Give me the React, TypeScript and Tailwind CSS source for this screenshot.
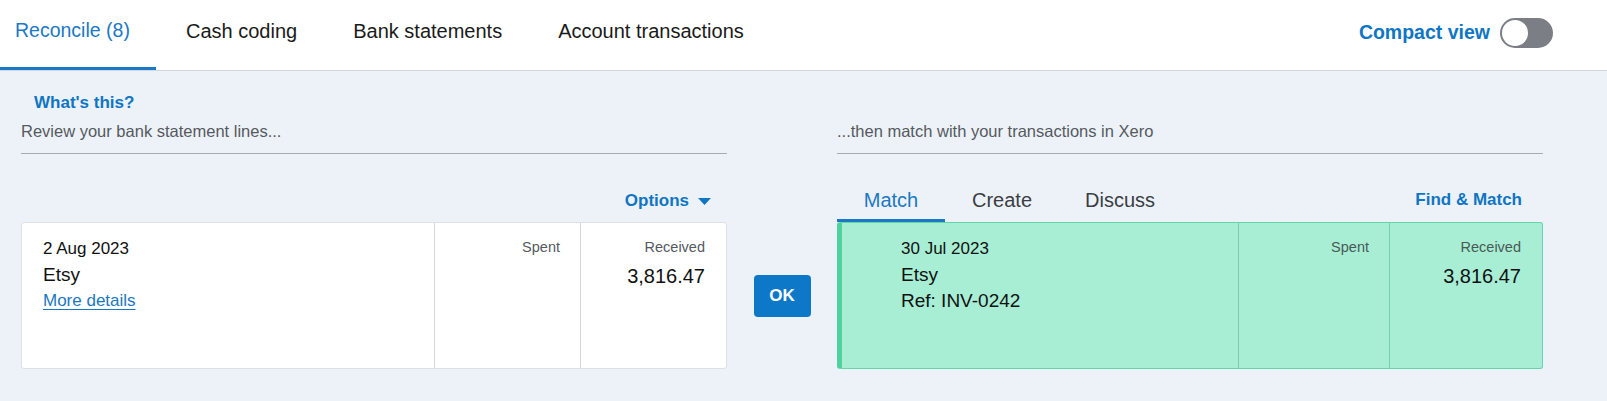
import React from "react";

const font = { fontFamily: '"Liberation Sans", Arial, sans-serif' };

export default function App() {
  return (
    <div className="w-[1607px] h-[401px] bg-[#edf2f8] overflow-hidden" style={font}>
      {/* Header */}
      <div className="h-[71px] bg-white border-b border-[#d3d7dc] flex items-stretch justify-between">
        <div className="flex items-stretch">
          <div className="w-[156px] pl-[15px] flex items-center border-b-[3px] border-[#1b78c4] text-[19.5px] text-[#1b78c4] pb-[5px]">
            Reconcile (8)
          </div>
          <div className="pl-[30px] pr-[26px] flex items-center text-[20px] text-[#1a1a1a] pb-[8px]">Cash coding</div>
          <div className="pl-[30px] pr-[26px] flex items-center text-[20px] text-[#1a1a1a] pb-[8px]">Bank statements</div>
          <div className="pl-[30px] pr-[26px] flex items-center text-[20px] text-[#1a1a1a] pb-[8px]">Account transactions</div>
        </div>
        <div className="flex items-center pr-[54px] gap-[10px] pb-[5px]">
          <span className="text-[19.5px] font-bold text-[#0f76c4]">Compact view</span>
          <div className="w-[53px] h-[30px] rounded-full bg-[#7b7e85] p-[2px] flex items-center">
            <div className="w-[26px] h-[26px] rounded-full bg-white" />
          </div>
        </div>
      </div>

      {/* Body */}
      <div className="flex pl-[21px] pt-[22px]">
        {/* Left column */}
        <div className="w-[706px] flex flex-col">
          <div className="pl-[13px] text-[17px] leading-[20px] font-bold text-[#0f76c4]">What's this?</div>
          <div className="mt-[8px] pb-[12px] border-b border-[#a6abb1] text-[16.5px] leading-[20px] text-[#555a60]">
            Review your bank statement lines...
          </div>
          <div className="h-[68px] flex items-center justify-end pr-[16px] pt-[26px]">
            <span className="text-[17px] font-bold text-[#0f76c4]">Options</span>
            <svg className="ml-[9px]" width="13" height="7" viewBox="0 0 13 7">
              <path d="M0 0 H13 L6.5 7 Z" fill="#0f76c4" />
            </svg>
          </div>
          <div className="h-[147px] bg-white rounded-[3px] border border-[#dde0e4] flex">
            <div className="w-[412px] pl-[21px] pt-[13px]">
              <div className="text-[17px] leading-[26px] text-[#111]">2 Aug 2023</div>
              <div className="text-[19px] leading-[26px] text-[#111]">Etsy</div>
              <div className="text-[17px] leading-[26px] text-[#1a78c2] underline underline-offset-[3px]">More details</div>
            </div>
            <div className="w-[146px] border-l border-[#d4d7db] pr-[20px] pt-[15px] text-right">
              <div className="text-[14.5px] leading-[18px] text-[#555a60]">Spent</div>
            </div>
            <div className="flex-1 border-l border-[#d4d7db] pr-[21px] pt-[15px] text-right">
              <div className="text-[14.5px] leading-[18px] text-[#555a60]">Received</div>
              <div className="mt-[7px] text-[20px] leading-[26px] text-[#111]">3,816.47</div>
            </div>
          </div>
        </div>

        {/* Middle OK */}
        <div className="w-[110px] flex flex-col">
          <div className="h-[129px]" />
          <div className="h-[147px] flex items-center justify-center">
            <div className="w-[57px] h-[42px] rounded-[4px] bg-[#0d78c8] text-white text-[17px] font-bold flex items-center justify-center">
              OK
            </div>
          </div>
        </div>

        {/* Right column */}
        <div className="w-[706px] flex flex-col">
          <div className="h-[20px]" />
          <div className="mt-[8px] pb-[12px] border-b border-[#a6abb1] text-[16.5px] leading-[20px] text-[#555a60]">
            ...then match with your transactions in Xero
          </div>
          <div className="h-[68px] flex items-end justify-between">
            <div className="flex items-stretch h-[46px]">
              <div className="w-[108px] flex items-center justify-center border-b-[3px] border-[#1b78c4] text-[20px] text-[#1b78c4] pt-[4px]">
                Match
              </div>
              <div className="pl-[27px] pr-[27px] flex items-center text-[20px] text-[#3a3e44] pt-[1px]">Create</div>
              <div className="pl-[26px] flex items-center text-[20px] text-[#3a3e44] pt-[1px]">Discuss</div>
            </div>
            <div className="h-[46px] flex items-center pr-[21px] pt-[1px] text-[17px] font-bold text-[#0f76c4]">
              Find &amp; Match
            </div>
          </div>
          <div className="h-[147px] bg-[#a7eed5] rounded-[3px] border border-[#62d5a9] border-l-[5px] border-l-[#50d29f] flex">
            <div className="w-[396px] pl-[59px] pt-[13px]">
              <div className="text-[17px] leading-[26px] text-[#111]">30 Jul 2023</div>
              <div className="text-[19px] leading-[26px] text-[#111]">Etsy</div>
              <div className="text-[19px] leading-[26px] text-[#111]">Ref: INV-0242</div>
            </div>
            <div className="w-[151px] border-l border-[#7ccfae] pr-[20px] pt-[15px] text-right">
              <div className="text-[14.5px] leading-[18px] text-[#4a5a55]">Spent</div>
            </div>
            <div className="flex-1 border-l border-[#7ccfae] pr-[21px] pt-[15px] text-right">
              <div className="text-[14.5px] leading-[18px] text-[#4a5a55]">Received</div>
              <div className="mt-[7px] text-[20px] leading-[26px] text-[#111]">3,816.47</div>
            </div>
          </div>
        </div>
      </div>
    </div>
  );
}
